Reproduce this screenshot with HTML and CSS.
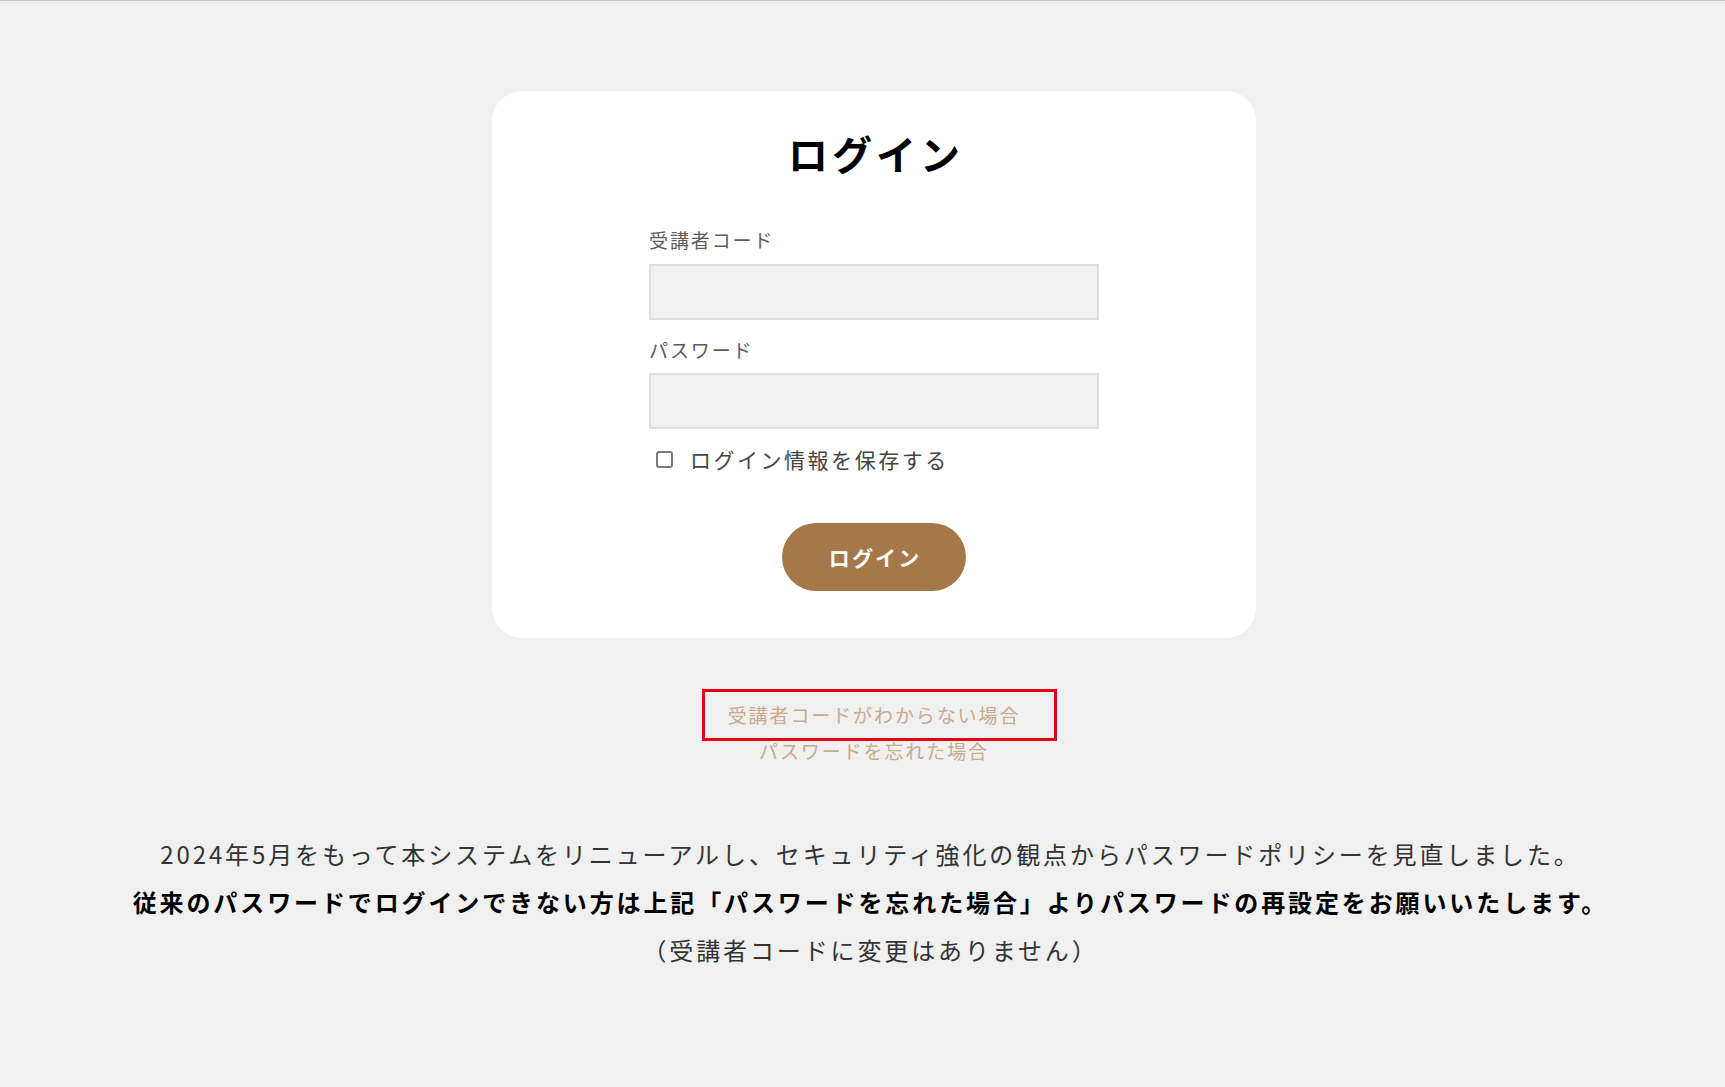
FILE: index.html
```html
<!DOCTYPE html>
<html lang="ja">
<head>
<meta charset="utf-8">
<title>ログイン</title>
<link rel="stylesheet" href="styles.css">
</head>
<body>
<div class="page">
  <div class="center-col">
    <div class="card">
      <h1 class="title">ログイン</h1>
      <form class="form">
        <label class="label" for="code">受講者コード</label>
        <input class="field" id="code" type="text">
        <label class="label label-2" for="pw">パスワード</label>
        <input class="field" id="pw" type="password">
        <div class="remember">
          <input class="check" id="rem" type="checkbox">
          <label class="remember-text" for="rem">ログイン情報を保存する</label>
        </div>
        <div class="btn-row">
          <button class="btn" type="button">ログイン</button>
        </div>
      </form>
    </div>
    <div class="links">
      <a class="link link-marked" href="#">受講者コードがわからない場合</a>
      <a class="link" href="#">パスワードを忘れた場合</a>
    </div>
  </div>
  <div class="notice">
    <p class="notice-line">2024年5月をもって本システムをリニューアルし、セキュリティ強化の観点からパスワードポリシーを見直しました。</p>
    <p class="notice-line notice-bold">従来のパスワードでログインできない方は上記「パスワードを忘れた場合」よりパスワードの再設定をお願いいたします。</p>
    <p class="notice-line">（受講者コードに変更はありません）</p>
  </div>
</div>
</body>
</html>
```
FILE: styles.css
```css
html, body {
  margin: 0;
  padding: 0;
}
body {
  background: #f0f0f0;
  border-top: 1px solid #c4c4c4;
  font-family: "Noto Sans CJK JP", "Noto Sans", sans-serif;
  color: #333;
  min-height: 1086px;
}
.page {
  padding-left: 16px;
  padding-top: 90px;
}
.center-col {
  padding-left: 7px;
  display: flex;
  flex-direction: column;
  align-items: center;
}
.card {
  width: 764px;
  box-sizing: border-box;
  background: #fff;
  border-radius: 30px;
  padding: 34px 0 47px;
}
.title {
  margin: 0;
  font-size: 40px;
  line-height: 57px;
  font-weight: 700;
  color: #000;
  letter-spacing: 0.1em;
  text-indent: 0.1em;
  text-align: center;
}
.form {
  width: 450px;
  margin: 44px auto 0;
  display: flex;
  flex-direction: column;
}
.label {
  font-size: 19px;
  line-height: 28px;
  letter-spacing: 0.1em;
  color: #5c5c5c;
  margin-bottom: 10px;
}
.label-2 {
  margin-top: 16px;
  margin-bottom: 9px;
}
.field {
  width: 100%;
  height: 56px;
  box-sizing: border-box;
  border: 2px solid #dedede;
  background: #f0f0f0;
  margin: 0;
  font-size: 18px;
  padding: 0 12px;
}
.remember {
  margin-top: 14px;
  height: 32px;
  display: flex;
  align-items: center;
}
.check {
  appearance: none;
  -webkit-appearance: none;
  width: 17px;
  height: 17px;
  margin: 0 0 0 7px;
  box-sizing: border-box;
  border: 2px solid #7a7a7a;
  border-radius: 3px;
  background: #fff;
}
.remember-text {
  margin-left: 17px;
  font-size: 21px;
  line-height: 32px;
  letter-spacing: 0.12em;
  color: #444;
}
.btn-row {
  margin-top: 48px;
  display: flex;
  justify-content: center;
}
.btn {
  width: 184px;
  height: 68px;
  border: none;
  border-radius: 34px;
  background: #a47848;
  color: #fff;
  font-family: "Noto Sans CJK JP", "Noto Sans", sans-serif;
  font-size: 21px;
  font-weight: 700;
  letter-spacing: 0.1em;
  text-indent: 0.1em;
  padding: 0;
}
.links {
  margin-top: 59px;
  display: flex;
  flex-direction: column;
  align-items: center;
}
.link {
  font-size: 19px;
  line-height: 36px;
  letter-spacing: 0.1em;
  color: #c9aa8a;
  text-decoration: none;
}
.link-marked {
  position: relative;
}
.link-marked::after {
  content: "";
  position: absolute;
  left: -26px;
  right: -37px;
  top: -8px;
  bottom: -8px;
  border: 3px solid #e60012;
}
.notice {
  margin-top: 61px;
  text-align: center;
}
.notice-line {
  margin: 0;
  font-size: 24px;
  line-height: 48px;
  letter-spacing: 0.12em;
  color: #333;
}
.notice-bold {
  font-weight: 700;
  color: #000;
}
```
